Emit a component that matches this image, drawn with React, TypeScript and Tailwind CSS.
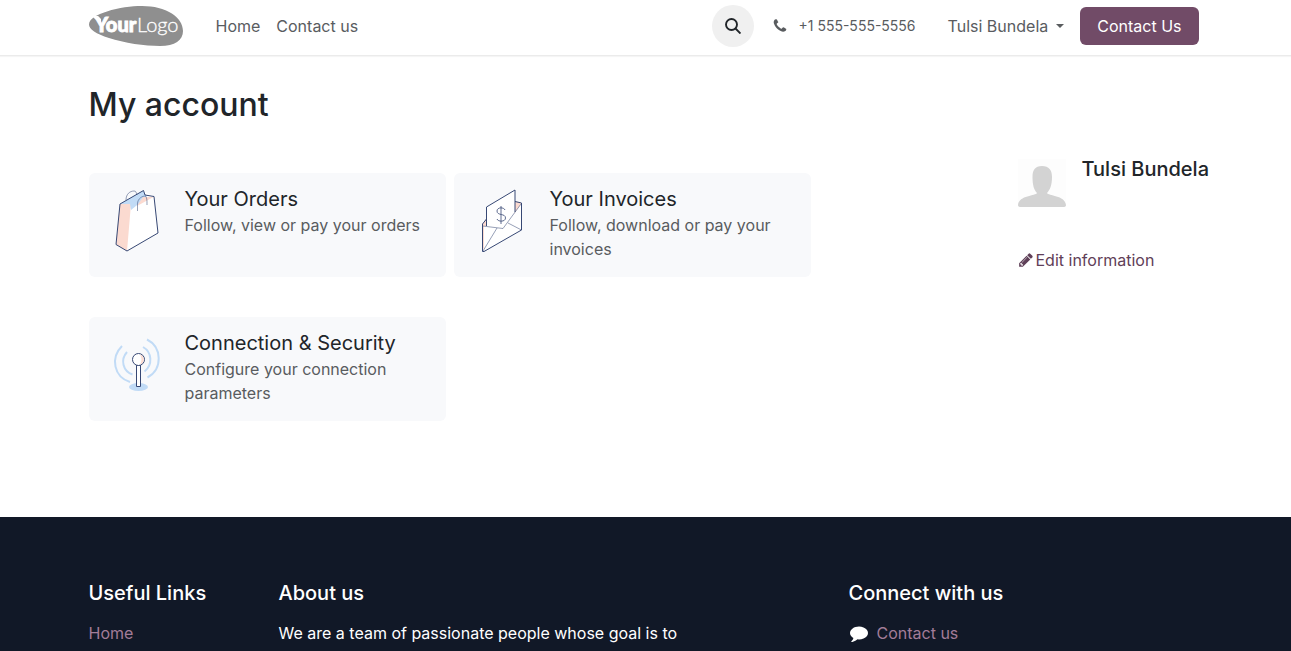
import React from 'react';

const CONTAINER = 'mx-auto w-full max-w-[1110px]';

function FaIcon({ d, className }: { d: string; className: string }) {
  return (
    <svg viewBox="0 0 1792 1792" fill="currentColor" className={className} aria-hidden="true">
      <path d={d} />
    </svg>
  );
}

const PHONE =
  'M1600 1240q0 27-10 70.5t-21 68.5q-21 50-122 106-94 51-186 51-27 0-53-3.5t-57-12.5-47-14.5-55.5-20.5-49.5-18q-98-35-175-83-127-79-264-216t-216-264q-48-77-83-175-3-9-18-49.5t-20.5-55.5-14.5-47-12.5-57-3.5-53q0-92 51-186 56-101 106-122 25-11 68.5-21t70.5-10q14 0 21 3 18 6 53 76 11 19 30 54t35 63.5 31 53.5q3 4 17.5 25t21.5 35.5 7 28.5q0 20-28.5 50t-62 55-62 53-28.5 46q0 9 5 22.5t8.5 20.5 14 24 11.5 19q76 137 174 235t235 174q2 1 19 11.5t24 14 20.5 8.5 22.5 5q18 0 46-28.5t53-62 55-62 50-28.5q14 0 28.5 7t35.5 21.5 25 17.5q25 15 53.5 31t63.5 35 54 30q70 35 76 53 3 7 3 21z';
const PENCIL =
  'M491 1536l91-91-235-235-91 91v107h128v128h107zm523-928q0-22-22-22-10 0-17 7l-542 542q-7 7-7 17 0 22 22 22 10 0 17-7l542-542q7-7 7-17zm-54-192l416 416-832 832h-416v-416zm683 96q0 53-37 90l-166 166-416-416 166-165q36-38 90-38 53 0 91 38l235 234q37 39 37 91z';
const COMMENT =
  'M1792 896q0 174-120 321.5t-326 233-450 85.5q-70 0-145-8-198 175-460 242-49 14-114 22-17 2-30.5-9t-17.5-29v-1q-3-4-.5-12t2-10 4.5-9.5l6-9 7-8.5 8-9q7-8 31-34.5t34.5-38 31-39.5 32.5-51 27-59 26-76q-157-89-247.5-220t-90.5-281q0-130 71-248.5t191-204.5 286-136.5 348-50.5q244 0 450 85.5t326 233 120 321.5z';

function Logo() {
  return (
    <svg viewBox="0 0 95 40" className="h-10 w-[95px]" role="img" aria-label="Your Logo">
      <path
        d="M0 18.500C0 13 8 8.500 18 5.500C30 1.500 42 0 53 0C77 0 94 11 94 25C94 34 86 40 71 40C56 40 35 37 20 32C7 28 0 23 0 18.500Z"
        fill="#8f8f8f"
      />
      <path d="M3 10H9L12 13V17L6 13Z" fill="#fff" />
      <g fill="#fff" stroke="#fff" fontFamily="Lato, sans-serif">
        <text x="6" y="25.500" fontSize="20" fontWeight="900" strokeWidth=".9">
          Your
        </text>
        <text x="48" y="25.500" fontSize="20" fontWeight="300" strokeWidth=".3">
          Logo
        </text>
      </g>
    </svg>
  );
}

function BagIcon() {
  return (
    <svg viewBox="0 0 64 64" className="size-16 shrink-0" aria-hidden="true">
      <path d="M15 15L38 1.500L49 7.500L53 44L22 62L11 55.500Z" fill="#fff" />
      <path d="M15 15L26 15L22 62L11 55.500Z" fill="#fbdad0" />
      <path d="M15 15L38 1.500L42 8L26 21L25 15Z" fill="#c1dbf6" />
      <path d="M38 8L48.500 8L32 17Z" fill="#fbdad0" />
      <g fill="none" stroke="#374874">
        <path d="M15 15L38.500 1.500L40 6L49 7.500L53 44L22 62L11 55.500Z" strokeWidth="1" />
        <path d="M21 11C21 5 25 2 29 2C31 2 31 3 32 6M32.500 22V15C32.500 9 38 7 40 7C42 8 42 11 42 16" strokeWidth=".7" opacity=".75" />
      </g>
    </svg>
  );
}

function InvoiceIcon() {
  return (
    <svg viewBox="0 0 64 64" className="size-16 shrink-0" aria-hidden="true">
      <path d="M12 35L51.500 14V41L12 63Z" fill="#fff" />
      <path d="M12 35L17 29V37H12ZM45 12L51.500 14L44 25ZM12 37H14V59L12 62Z" fill="#fbdad0" />
      <path d="M16.500 18L45 1V23L34 39L16.500 37Z" fill="#fff" />
      <g fill="none" stroke="#374874" strokeWidth="1">
        <path d="M16.500 37V18L45 1V23M16.500 30L12.500 35V62.500H14L51.500 41V14L45 12.500" />
        <path d="M12.500 37L33 39.500L51 15M13 62L27 39M38 34L51.500 41" strokeWidth=".7" opacity=".75" />
        <path d="M31 17V35M35 21C34 18 27 18 27 22C27 27 35.500 24 35.500 29C35.500 33 28 33 27 30" strokeWidth=".8" />
      </g>
    </svg>
  );
}

function SecurityIcon() {
  return (
    <svg viewBox="0 0 64 64" className="size-16 shrink-0" aria-hidden="true">
      <ellipse cx="33.500" cy="54" rx="9.500" ry="4" fill="#c1dbf6" />
      <g fill="none" stroke="#c1dbf6" strokeWidth="2">
        <path d="M17 13C5 25 9 44 25 49" />
        <path d="M22 19C15 27 18 38 27.500 41.500M38 14C47 19 48 32 39.500 38.500" />
        <path d="M42 6.500C57 14 58 36 42.500 44.500" />
      </g>
      <g stroke="#374874" strokeWidth="1">
        <path d="M31.500 32H35.500V53.500H31.500Z" fill="#fff" />
        <circle cx="33.500" cy="26.500" r="6" fill="#fff" />
      </g>
      <path d="M35 21.500C40 23 40 30 35 31.500C37 28 37 25 35 21.500Z" fill="#fbdad0" />
    </svg>
  );
}

function AvatarIcon() {
  return (
    <svg viewBox="0 0 48 48" className="size-12 shrink-0" role="img" aria-label="Tulsi Bundela">
      <rect width="48" height="48" fill="#fdfdfd" />
      <path
        d="M24 7C31 7 34 11 34 18C34 26 32 31 29 34C30 37 47 36 48 46Q48 48 45 48H3Q0 48 0 46C1 36 18 37 19 34C16 31 14.500 26 14.500 18C14.500 11 17 7 24 7Z"
        fill="#d3d3d3"
      />
    </svg>
  );
}

const cards = [
  { title: 'Your Orders', text: 'Follow, view or pay your orders', icon: <BagIcon /> },
  { title: 'Your Invoices', text: 'Follow, download or pay your invoices', icon: <InvoiceIcon /> },
  { title: 'Connection & Security', text: 'Configure your connection parameters', icon: <SecurityIcon /> },
];

function Header() {
  return (
    <header className="border-b border-[#ebebeb] bg-white pt-[5px] pr-1 pb-2 shadow-[0_1px_1px_rgba(0,0,0,0.04)]">
      <div className={`${CONTAINER} flex items-center`}>
        <a href="#">
          <Logo />
        </a>
        <nav className="ml-8 flex gap-4">
          <a href="#">Home</a>
          <a href="#">Contact us</a>
        </nav>
        <div className="ml-auto flex items-center">
          <button
            type="button"
            aria-label="Search"
            className="flex size-[42px] items-center justify-center rounded-full bg-[#f0f0f0] text-[#212529]"
          >
            <svg viewBox="0 0 16 16" className="size-4" fill="none" stroke="currentColor" strokeWidth="1.900">
              <circle cx="6.500" cy="6.500" r="5.500" />
              <path d="M10.500 10.500L15.500 15.500" />
            </svg>
          </button>
          <a href="#" className="ml-[18px] flex items-center gap-[11px] text-sm">
            <FaIcon d={PHONE} className="size-4" />
            +1 555-555-5556
          </a>
          <button type="button" className="ml-8 flex items-center gap-2">
            Tulsi Bundela
            <span className="border-x-4 border-t-4 border-x-transparent border-t-current" />
          </button>
          <a href="#" className="ml-4 rounded-md bg-[#714b67] px-[17px] py-[7px] text-white">
            Contact Us
          </a>
        </div>
      </div>
    </header>
  );
}

function App() {
  return (
    <div className="flex min-h-screen flex-col bg-white font-['Inter',sans-serif] text-base text-[#595c5f]">
      <Header />
      <main className="pt-[29px] pr-1 pb-24">
        <div className={CONTAINER}>
          <h1 className="text-[32px] leading-10 font-medium text-[#212529]">My account</h1>
          <div className="mt-8 flex justify-between gap-8">
            <div className="mt-4 grid w-full max-w-[722px] grid-cols-2 gap-x-2 gap-y-10">
              {cards.map((card) => (
                <a href="#" key={card.title} className="flex min-h-[104px] gap-4 rounded-md bg-[#f8f9fb] p-4">
                  {card.icon}
                  <div>
                    <h2 className="mb-1 text-xl leading-5 text-[#212529]">{card.title}</h2>
                    <p>{card.text}</p>
                  </div>
                </a>
              ))}
            </div>
            <aside className="w-[181px] shrink-0">
              <div className="flex gap-4">
                <div className="pt-0.5">
                  <AvatarIcon />
                </div>
                <h3 className="text-xl leading-6 font-medium whitespace-nowrap text-[#212529]">Tulsi Bundela</h3>
              </div>
              <a href="#" className="mt-[41px] flex items-center gap-0.5 text-[#5f4058]">
                <FaIcon d={PENCIL} className="size-4" />
                Edit information
              </a>
            </aside>
          </div>
        </div>
      </main>
      <footer className="grow bg-[#111827] pt-16 pr-1 text-white">
        <div className={`${CONTAINER} flex`}>
          <div className="w-[190px]">
            <h4 className="mb-4 text-xl leading-6 font-medium">Useful Links</h4>
            <a href="#" className="text-[#a37c98]">
              Home
            </a>
          </div>
          <div className="w-[570px]">
            <h4 className="mb-4 text-xl leading-6 font-medium">About us</h4>
            <p>We are a team of passionate people whose goal is to</p>
          </div>
          <div>
            <h4 className="mb-4 text-xl leading-6 font-medium">Connect with us</h4>
            <p className="flex items-center gap-2">
              <FaIcon d={COMMENT} className="size-5 p-px" />
              <a href="#" className="text-[#a37c98]">
                Contact us
              </a>
            </p>
          </div>
        </div>
      </footer>
    </div>
  );
}

export default App;
